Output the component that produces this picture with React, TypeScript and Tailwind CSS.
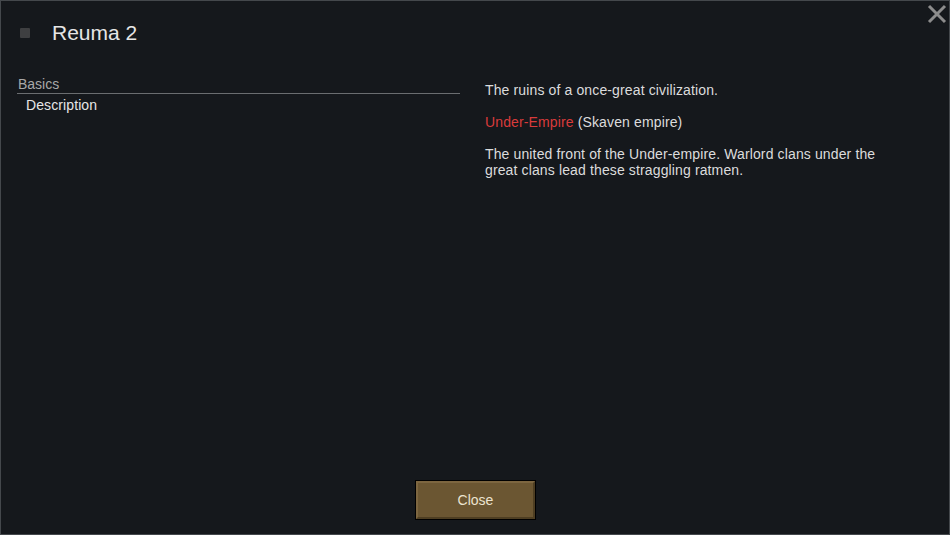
import React from "react";

export default function App() {
  return (
    <div
      className="w-[950px] h-[535px] bg-[#15181c] border border-[#44484c] relative overflow-hidden text-[#dcdcdc]"
      style={{ fontFamily: '"Liberation Sans", Arial, sans-serif' }}
    >
      <svg className="absolute right-[2px] top-[3px]" width="20" height="20" viewBox="0 0 20 20">
        <path d="M2 2 L18 18 M18 2 L2 18" stroke="#8c8c8c" strokeWidth="3" />
      </svg>
      <div className="flex items-center h-[30px] mt-[17px] pl-[19px]">
        <div className="w-[10px] h-[10px] bg-[#3e3f41] rounded-[1px]" />
        <div className="ml-[22px] text-[21px] text-[#e6e6e6]">Reuma 2</div>
      </div>
      <div className="flex mt-[27px]">
        <div className="w-[443px] ml-[16px]">
          <div className="text-[14px] text-[#a8a8a8] leading-[18px] pl-[1px]">Basics</div>
          <div className="h-px bg-[#6a6d70]" />
          <div className="text-[14px] text-[#e6e6e6] leading-[20px] pl-[9px] mt-[1px] tracking-[0.1px]">Description</div>
        </div>
        <div className="ml-[25px] w-[405px] text-[14px] leading-[16px] pt-[7px] tracking-[0.13px]">
          <p>The ruins of a once-great civilization.</p>
          <p className="mt-[16px]">
            <span className="text-[#d93b3b]">Under-Empire</span> (Skaven empire)
          </p>
          <p className="mt-[16px]">
            The united front of the Under-empire. Warlord clans under the great clans lead these straggling ratmen.
          </p>
        </div>
      </div>
      <div className="absolute left-[414px] top-[479px] w-[121px] h-[40px] bg-[#000] p-px">
        <div className="w-full h-full bg-[#6b5632] border-2 border-t-[#7d6640] border-l-[#7d6640] border-r-[#4e3e22] border-b-[#4e3e22] flex items-center justify-center text-[14px] text-[#ece4d0]">
          Close
        </div>
      </div>
    </div>
  );
}
